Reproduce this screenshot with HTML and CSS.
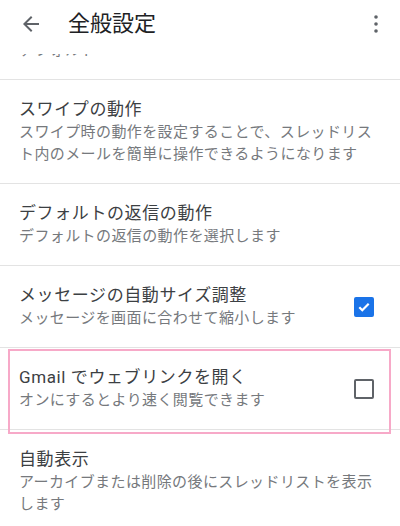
FILE: index.html
```html
<!DOCTYPE html>
<html lang="ja">
<head>
  <meta charset="UTF-8" />
  <meta name="viewport" content="width=device-width, initial-scale=1.0"/>
  <title>全般設定</title>
  <link rel="stylesheet" href="styles.css">
</head>
<body>

  <header class="topbar">
    <button class="icon-btn back-btn" aria-label="戻る">
      <svg width="24" height="24" viewBox="0 0 24 24">
        <path d="M20 11H7.83l5.59-5.59L12 4l-8 8 8 8 1.41-1.41L7.83 13H20v-2z" fill="#5f6368"/>
      </svg>
    </button>
    <h1 class="topbar-title">全般設定</h1>
    <button class="icon-btn more-btn" aria-label="その他">
      <svg width="24" height="24" viewBox="0 0 24 24" fill="#5f6368">
        <circle cx="12" cy="5" r="1.8"/>
        <circle cx="12" cy="12" r="1.8"/>
        <circle cx="12" cy="19" r="1.8"/>
      </svg>
    </button>
  </header>

  <div class="scroller">
    <ul class="settings">
      <!-- list is scrolled: only the end of this row is under the bar -->
      <li class="row">
        <div class="text">
          <div class="summary">デフォルト</div>
        </div>
      </li>
      <li class="row">
        <div class="text">
          <div class="title">スワイプの動作</div>
          <div class="summary">スワイプ時の動作を設定することで、スレッドリスト内のメールを簡単に操作できるようになります</div>
        </div>
      </li>
      <li class="row">
        <div class="text">
          <div class="title">デフォルトの返信の動作</div>
          <div class="summary">デフォルトの返信の動作を選択します</div>
        </div>
      </li>
      <li class="row has-check">
        <div class="text">
          <div class="title">メッセージの自動サイズ調整</div>
          <div class="summary">メッセージを画面に合わせて縮小します</div>
        </div>
        <span class="check checked">
          <svg width="14" height="14" viewBox="0 0 14 14">
            <path d="M2.3 7.2l3 3 6.4-6.4" fill="none" stroke="#fff" stroke-width="2.2"/>
          </svg>
        </span>
      </li>
      <li class="row has-check marked">
        <div class="text">
          <div class="title">Gmail でウェブリンクを開く</div>
          <div class="summary">オンにするとより速く閲覧できます</div>
        </div>
        <span class="check"></span>
      </li>
      <li class="row">
        <div class="text">
          <div class="title">自動表示</div>
          <div class="summary">アーカイブまたは削除の後にスレッドリストを表示します</div>
        </div>
      </li>
    </ul>
  </div>

</body>
</html>
```

FILE: styles.css
```css
body {
  margin: 0;
  width: 400px;
  height: 526px;
  overflow: hidden;
  background: #fff;
  font-family: Roboto, "Noto Sans CJK JP", sans-serif;
  display: flex;
  flex-direction: column;
}

/* top app bar */
.topbar {
  height: 54px;
  padding: 0 12px 6px 19px;
  box-sizing: border-box;
  display: flex;
  align-items: center;
  background: #fff;
  flex-shrink: 0;
}

.icon-btn {
  border: none;
  background: none;
  padding: 0;
  width: 24px;
  height: 24px;
  display: flex;
}

.topbar-title {
  flex: 1;
  margin: 0 0 0 25px;
  font-size: 22px;
  font-weight: 400;
  color: #202124;
  line-height: 28px;
}

/* settings list */
.scroller {
  flex: 1;
  overflow: hidden;
}

.settings {
  list-style: none;
  margin: -33px 0 0;
  padding: 0;
}

.row {
  position: relative;
  display: flex;
  align-items: center;
  padding: 18px 21px 18px 19px;
  border-bottom: 1px solid #e3e3e3;
}

.row.has-check {
  padding-right: 26px;
}

.text {
  flex: 1;
}

.title {
  font-size: 17px;
  line-height: 23px;
  letter-spacing: 0.6px;
  color: #3c4043;
}

.summary {
  font-size: 15px;
  line-height: 22px;
  letter-spacing: 0.4px;
  color: #76797d;
}

/* checkboxes */
.check {
  width: 20px;
  height: 20px;
  box-sizing: border-box;
  margin-left: 20px;
  border: 2.5px solid #5f6368;
  border-radius: 2px;
  display: flex;
  align-items: center;
  justify-content: center;
}

.check.checked {
  background: #1a73e8;
  border-color: #1a73e8;
}

/* pink highlight frame around one row */
.marked::after {
  content: "";
  position: absolute;
  top: 1px;
  bottom: -5px;
  left: 8px;
  right: 9px;
  border: 2px solid #f7a9c8;
  pointer-events: none;
}
```
